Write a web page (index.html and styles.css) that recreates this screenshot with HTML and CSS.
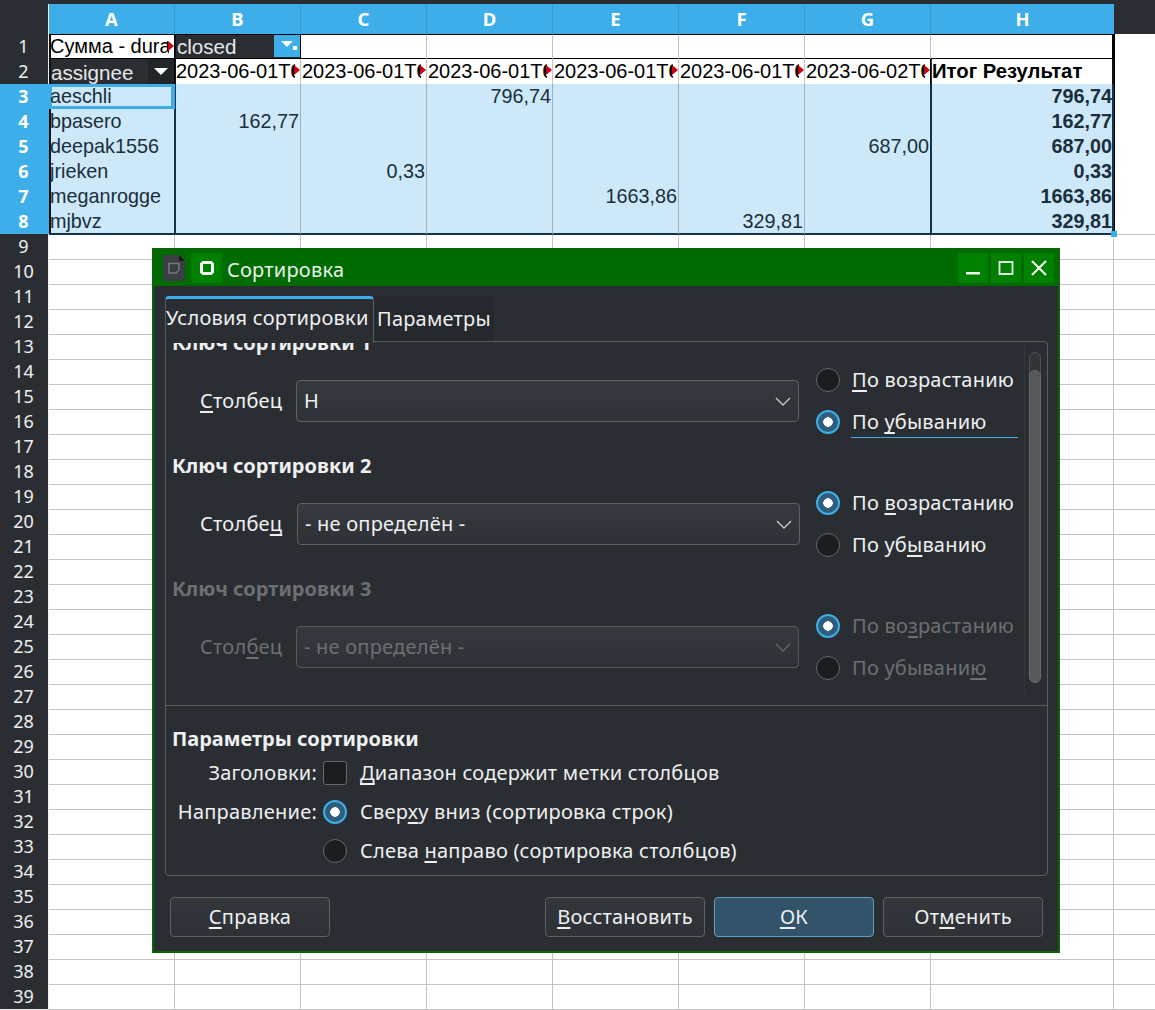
FILE: index.html
```html
<!DOCTYPE html>
<html lang="ru">
<head>
<meta charset="utf-8">
<title>Сортировка</title>
<link rel="stylesheet" href="styles.css">
</head>
<body>
<div class="sheet">
  <div class="row head">
    <div class="corner"></div>
    <div class="ch">A</div><div class="ch">B</div><div class="ch">C</div><div class="ch">D</div><div class="ch">E</div><div class="ch">F</div><div class="ch">G</div><div class="ch ch-last">H</div>
    <div class="ch-end"></div>
  </div>
  <div class="row">
    <div class="rh">1</div>
    <div class="c r1 first tri">Сумма - dura</div>
    <div class="c r1 dark sep">closed<span class="dd dd-blue"><svg class="dd-icon" width="16" height="12" viewBox="0 0 16 12"><path d="M0 1h12L6 7z" fill="#fff"/><rect x="12" y="6" width="4" height="4" fill="#fff"/></svg></span></div>
    <div class="c r1"></div><div class="c r1"></div><div class="c r1"></div><div class="c r1"></div><div class="c r1"></div>
    <div class="c r1 last"></div>
    <div class="c x xb"></div>
  </div>
  <div class="row">
    <div class="rh">2</div>
    <div class="c r2 first dark clip">assignee<span class="dd dd-dark"><svg width="14" height="8" viewBox="0 0 14 8"><path d="M0 0h14L7 7z" fill="#fff"/></svg></span></div>
    <div class="c r2 tri sep">2023-06-01T0</div>
    <div class="c r2 tri">2023-06-01T0</div>
    <div class="c r2 tri">2023-06-01T0</div>
    <div class="c r2 tri">2023-06-01T0</div>
    <div class="c r2 tri">2023-06-01T0</div>
    <div class="c r2 tri">2023-06-02T0</div>
    <div class="c r2 last sepl total">Итог Результат</div>
    <div class="c x xb"></div>
  </div>
  <div class="row">
    <div class="rh on">3</div>
    <div class="c s first cursor">aeschli</div><div class="c s sep"></div><div class="c s"></div><div class="c s num">796,74</div><div class="c s"></div><div class="c s"></div><div class="c s"></div><div class="c s slast sepl num total">796,74</div>
    <div class="c x xb"></div>
  </div>
  <div class="row">
    <div class="rh on">4</div>
    <div class="c s first">bpasero</div><div class="c s sep num">162,77</div><div class="c s"></div><div class="c s"></div><div class="c s"></div><div class="c s"></div><div class="c s"></div><div class="c s slast sepl num total">162,77</div>
    <div class="c x xb"></div>
  </div>
  <div class="row">
    <div class="rh on">5</div>
    <div class="c s first">deepak1556</div><div class="c s sep"></div><div class="c s"></div><div class="c s"></div><div class="c s"></div><div class="c s"></div><div class="c s num">687,00</div><div class="c s slast sepl num total">687,00</div>
    <div class="c x xb"></div>
  </div>
  <div class="row">
    <div class="rh on">6</div>
    <div class="c s first">jrieken</div><div class="c s sep"></div><div class="c s num">0,33</div><div class="c s"></div><div class="c s"></div><div class="c s"></div><div class="c s"></div><div class="c s slast sepl num total">0,33</div>
    <div class="c x xb"></div>
  </div>
  <div class="row">
    <div class="rh on">7</div>
    <div class="c s first">meganrogge</div><div class="c s sep"></div><div class="c s"></div><div class="c s"></div><div class="c s num">1663,86</div><div class="c s"></div><div class="c s"></div><div class="c s slast sepl num total">1663,86</div>
    <div class="c x xb"></div>
  </div>
  <div class="row">
    <div class="rh on">8</div>
    <div class="c s first end">mjbvz</div><div class="c s sep end"></div><div class="c s end"></div><div class="c s end"></div><div class="c s end"></div><div class="c s num end">329,81</div><div class="c s end"></div><div class="c s slast sepl num total end">329,81</div>
    <div class="c x xb"></div>
  </div>
  <div class="row"><div class="rh">9</div><div class="blank"></div></div>
  <div class="row"><div class="rh">10</div><div class="blank"></div></div>
  <div class="row"><div class="rh">11</div><div class="blank"></div></div>
  <div class="row"><div class="rh">12</div><div class="blank"></div></div>
  <div class="row"><div class="rh">13</div><div class="blank"></div></div>
  <div class="row"><div class="rh">14</div><div class="blank"></div></div>
  <div class="row"><div class="rh">15</div><div class="blank"></div></div>
  <div class="row"><div class="rh">16</div><div class="blank"></div></div>
  <div class="row"><div class="rh">17</div><div class="blank"></div></div>
  <div class="row"><div class="rh">18</div><div class="blank"></div></div>
  <div class="row"><div class="rh">19</div><div class="blank"></div></div>
  <div class="row"><div class="rh">20</div><div class="blank"></div></div>
  <div class="row"><div class="rh">21</div><div class="blank"></div></div>
  <div class="row"><div class="rh">22</div><div class="blank"></div></div>
  <div class="row"><div class="rh">23</div><div class="blank"></div></div>
  <div class="row"><div class="rh">24</div><div class="blank"></div></div>
  <div class="row"><div class="rh">25</div><div class="blank"></div></div>
  <div class="row"><div class="rh">26</div><div class="blank"></div></div>
  <div class="row"><div class="rh">27</div><div class="blank"></div></div>
  <div class="row"><div class="rh">28</div><div class="blank"></div></div>
  <div class="row"><div class="rh">29</div><div class="blank"></div></div>
  <div class="row"><div class="rh">30</div><div class="blank"></div></div>
  <div class="row"><div class="rh">31</div><div class="blank"></div></div>
  <div class="row"><div class="rh">32</div><div class="blank"></div></div>
  <div class="row"><div class="rh">33</div><div class="blank"></div></div>
  <div class="row"><div class="rh">34</div><div class="blank"></div></div>
  <div class="row"><div class="rh">35</div><div class="blank"></div></div>
  <div class="row"><div class="rh">36</div><div class="blank"></div></div>
  <div class="row"><div class="rh">37</div><div class="blank"></div></div>
  <div class="row"><div class="rh">38</div><div class="blank"></div></div>
  <div class="row"><div class="rh">39</div><div class="blank"></div></div>
</div>

<div class="dialog">
  <div class="title">
    <span class="app-icon"><svg width="22" height="26" viewBox="0 0 22 26"><path d="M0 0h16l6 6v20H0z" fill="#3b3e42"/><path d="M16 0l6 6h-6z" fill="#16181a"/><path d="M6 8.500h10v6.500l-3 3H6z" fill="none" stroke="#777a7d" stroke-width="1.500"/></svg></span>
    <span class="tbtn tbtn-pin"><svg width="16" height="16" viewBox="0 0 16 16"><path d="M4 2.500h8l1.500 1.500v8L12 13.500H4L2.500 12V4z" fill="none" stroke="#f2f7f2" stroke-width="3"/></svg></span>
    <span class="title-text">Сортировка</span>
    <span class="tbtn tbtn-min"><svg width="16" height="16" viewBox="0 0 16 16"><rect x="1" y="12" width="14" height="2.500" fill="#eef5ee"/></svg></span>
    <span class="tbtn"><svg width="16" height="16" viewBox="0 0 16 16"><rect x="1.500" y="2" width="13" height="12" fill="none" stroke="#eef5ee" stroke-width="1.800"/></svg></span>
    <span class="tbtn"><svg width="16" height="16" viewBox="0 0 16 16"><path d="M1 1l14 14M15 1L1 15" fill="none" stroke="#eef5ee" stroke-width="2.200"/></svg></span>
  </div>
  <div class="body">
    <div class="tabs">
      <div class="tab tab-on">Условия сортировки</div>
      <div class="tab">Параметры</div>
    </div>
    <div class="pane">
      <div class="scroller">
        <div class="keys">
          <section class="key">
            <h2 class="kh">Ключ сортировки 1</h2>
            <div class="krow">
              <span class="klabel"><u>С</u>толбец</span>
              <div class="sel"><span>H</span><svg class="chev" width="16" height="9" viewBox="0 0 16 9"><path d="M1 1l7 7 7-7" fill="none" stroke="#c9cbcc" stroke-width="1.300"/></svg></div>
              <div class="opts">
                <div class="opt"><i class="radio"></i><span><u>П</u>о возрастанию</span></div>
                <div class="opt"><i class="radio radio-on"></i><span class="focus">По <u>у</u>быванию</span></div>
              </div>
            </div>
          </section>
          <section class="key k2">
            <h2 class="kh">Ключ сортировки 2</h2>
            <div class="krow">
              <span class="klabel">Столбе<u>ц</u></span>
              <div class="sel"><span>- не определён -</span><svg class="chev" width="16" height="9" viewBox="0 0 16 9"><path d="M1 1l7 7 7-7" fill="none" stroke="#c9cbcc" stroke-width="1.300"/></svg></div>
              <div class="opts">
                <div class="opt"><i class="radio radio-on"></i><span>По <u>в</u>озрастанию</span></div>
                <div class="opt"><i class="radio"></i><span>По уб<u>ы</u>ванию</span></div>
              </div>
            </div>
          </section>
          <section class="key off">
            <h2 class="kh">Ключ сортировки 3</h2>
            <div class="krow">
              <span class="klabel">Стол<u>б</u>ец</span>
              <div class="sel"><span>- не определён -</span><svg class="chev" width="16" height="9" viewBox="0 0 16 9"><path d="M1 1l7 7 7-7" fill="none" stroke="#66696b" stroke-width="1.300"/></svg></div>
              <div class="opts">
                <div class="opt"><i class="radio radio-on"></i><span>По во<u>з</u>растанию</span></div>
                <div class="opt"><i class="radio"></i><span>По убывани<u>ю</u></span></div>
              </div>
            </div>
          </section>
        </div>
        <div class="sbar"><div class="strack"><div class="sthumb"></div></div></div>
      </div>
      <div class="params">
        <h2 class="kh">Параметры сортировки</h2>
        <div class="pgrid">
          <span class="plabel">Заголовки:</span><i class="check"></i><span><u>Д</u>иапазон содержит метки столбцов</span>
          <span class="plabel">Направление:</span><i class="radio radio-on"></i><span>Свер<u>х</u>у вниз (сортировка строк)</span>
          <span></span><i class="radio"></i><span>Слева <u>н</u>аправо (сортировка столбцов)</span>
        </div>
      </div>
    </div>
    <div class="btns">
      <div class="btn"><span><u>С</u>правка</span></div>
      <div class="btn btn-push"><span><u>В</u>осстановить</span></div>
      <div class="btn btn-ok"><span><u>О</u>К</span></div>
      <div class="btn"><span>От<u>м</u>енить</span></div>
    </div>
  </div>
</div>
</body>
</html>
```
FILE: styles.css
```css
* { box-sizing: border-box; }
html, body { margin: 0; padding: 0; height: 1010px; overflow: hidden; background: #fff; }
body { font-family: "Noto Sans", sans-serif; position: relative; }

/* ---------- spreadsheet ---------- */
.sheet { width: 1155px; }
.row {
  display: grid;
  grid-template-columns: 49px repeat(7, 126px) 183px 1fr;
  height: 25px;
}
.head { height: 34px; background: #2a2e32; padding-top: 4px; }
.corner { background: #2a2e32; border-right: 1px solid #eff0f1; }
.ch {
  background: #3daee9;
  border-right: 1px solid #339bd2;
  border-bottom: 1px solid #111;
  color: #fff;
  font-weight: 700;
  font-size: 18.5px;
  line-height: 30px;
  text-align: center;
}
.ch-last { border-right: 0; }
.ch-end { background: #2a2e32; }
.rh {
  background: #2a2e32;
  color: #eff0f1;
  font-size: 18px;
  line-height: 25px;
  text-align: center;
  border-bottom: 1px solid #e4e5e6;
  border-right: 1px solid #eff0f1;
  padding-right: 1px;
}
.rh.on {
  background: #3daee9;
  color: #fff;
  font-weight: 700;
  border-bottom-color: #339bd2;
  border-right-color: #3daee9;
}
.c {
  position: relative;
  font-family: "Liberation Sans", sans-serif;
  font-size: 19.8px;
  line-height: 24px;
  color: #000;
  padding: 0 1px;
  white-space: nowrap;
  overflow: hidden;
  background: #fff;
  border-right: 1px solid #c4c4c4;
  border-bottom: 1px solid #c4c4c4;
}
.x { border-right: 0; }
.xb { box-shadow: inset 1px 0 #000; }
.r1 { font-size: 20px; border-top: 1px solid #000; border-bottom: 2px solid #000; line-height: 22px; }
.r1.dark { font-size: 20.6px; line-height: 23px; }
.r2 { font-size: 20px; border-bottom-color: #2c4a5e; }
.r2:nth-child(8) { border-right-color: #000; }
.first { box-shadow: inset 2px 0 #111; border-right-color: #000; }
.last { border-right: 0; box-shadow: inset -2px 0 #000; }
.slast { border-right: 0; box-shadow: inset -2px 0 #14324a; }
.dark {
  background: #2a2e32;
  color: #e6e8e9;
  border-right-color: #000;
  padding-left: 2px;
}
.clip { line-height: 27px; font-size: 20.6px; }
.sep { box-shadow: inset 1px 0 #111; }
.sepl { box-shadow: inset 1px 0 #14324a, inset -2px 0 #111; font-size: 20.3px; }
.s {
  background: #cde8f8;
  color: #1a2e3c;
  border-right-color: #9db3c2;
  border-bottom-color: #9db3c2;
}
.s.first, .s:nth-child(8) { border-right-color: #14324a; }
.s.sep { box-shadow: inset 1px 0 #14324a; }
.s.sepl { box-shadow: inset 1px 0 #14324a, inset -2px 0 #14324a; padding-right: 2px; font-size: 19.8px; }
.num { text-align: right; }
.total { font-weight: 700; }
.s.cursor { box-shadow: inset 0 0 0 3px #3daee9; border-bottom-color: #3daee9; border-right-color: #3daee9; }
.end { border-bottom: 2px solid #14324a; }
.tri::before {
  content: "";
  position: absolute;
  right: 0;
  top: 0;
  width: 5px;
  height: 100%;
  background: #fff;
}
.tri::after {
  content: "";
  position: absolute;
  right: 0;
  top: 6px;
  border-left: 6px solid #c9000f;
  border-top: 5px solid transparent;
  border-bottom: 5px solid transparent;
  filter: drop-shadow(-1px 0 0 #000);
}
.dd {
  position: absolute;
  right: 0;
  top: 0;
  width: 26px;
  height: 100%;
  display: flex;
  align-items: center;
  justify-content: center;
}
.dd-blue { background: #3daee9; height: 22px; }
.dd-dark { background: #232629; }
.dd-icon { margin-left: 3px; }
.blank {
  grid-column: 2 / -1;
  border-bottom: 1px solid #c4c4c4;
  background:
    repeating-linear-gradient(to right, transparent 0 125px, #c4c4c4 125px 126px) left top / 882px 100% no-repeat,
    linear-gradient(#c4c4c4, #c4c4c4) 1064px 0 / 1px 100% no-repeat;
}
.sheet::after {
  content: "";
  position: absolute;
  left: 1111px;
  top: 231px;
  width: 6px;
  height: 6px;
  background: #3daee9;
}

/* ---------- dialog window ---------- */
.dialog {
  position: absolute;
  left: 152px;
  top: 248px;
  width: 908px;
  height: 705px;
  display: flex;
  flex-direction: column;
  background: #2a2e32;
  border: 2px solid #0b640b;
  color: #eff0f1;
  font-size: 20px;
  letter-spacing: .22px;
}
.title {
  height: 36px;
  flex: none;
  display: flex;
  align-items: center;
  gap: 3px;
  background: #006b00;
  padding: 0 4px 0 9px;
}
.app-icon { display: flex; width: 22px; height: 26px; margin-right: 3px; }
.tbtn {
  width: 30px;
  height: 30px;
  background: #008000;
  border-radius: 2px;
  display: flex;
  align-items: center;
  justify-content: center;
}
.tbtn-pin { width: 31px; margin-right: 2px; }
.title-text { flex: 1; color: #e9f3e9; line-height: 30px; padding-top: 3px; }
.body {
  flex: 1;
  display: flex;
  flex-direction: column;
  padding: 10px 10px 14px 11px;
}
.tabs { display: flex; height: 45px; position: relative; z-index: 1; flex: none; }
.tab {
  height: 45px;
  line-height: 46px;
  white-space: nowrap;
  padding: 0 0 0 3px;
  background: #25282c;
  width: 120px;
}
.tab-on {
  width: 209px;
  padding: 0;
  height: 47px;
  background: #2a2e32;
  border: 1px solid #5a5d60;
  border-top: 3px solid #3daee9;
  border-bottom: 0;
  border-radius: 4px 4px 0 0;
  line-height: 37px;
}
.pane {
  height: 535px;
  flex: none;
  border: 1px solid #5a5d60;
  border-radius: 4px;
  background: #2a2e32;
}
.scroller {
  height: 350px;
  overflow: hidden;
  display: flex;
}
.keys { flex: 1; margin-top: -11px; padding-left: 6px; }
.key { height: 123px; }
.kh { margin: 0; font-size: 20px; font-weight: 700; line-height: 24px; letter-spacing: 0; }
.krow { display: flex; align-items: flex-start; margin-top: 13px; }
.klabel { width: 124px; padding-left: 28px; line-height: 42px; margin-top: 12px; }
.k2 .klabel { width: 125px; }
.sel {
  width: 503px;
  height: 42px;
  margin-top: 12px;
  border: 1px solid #5f6265;
  border-radius: 4px;
  background: linear-gradient(#363a3f, #2e3237);
  display: flex;
  align-items: center;
  justify-content: space-between;
  padding: 0 7px 2px;
}
.chev { margin-top: 2px; }
.opts { margin-left: 17px; display: flex; flex-direction: column; gap: 18px; }
.k2 .opts { margin-left: 16px; }
.opt { display: flex; align-items: center; gap: 12px; height: 24px; white-space: nowrap; }
.opt > span { margin-top: -2px; }
.radio {
  display: block;
  flex: none;
  width: 24px;
  height: 24px;
  border-radius: 50%;
  background: #1b1e20;
  border: 1.500px solid #66696c;
}
.radio-on {
  border: 2px solid #3daee9;
  background: radial-gradient(circle, #fff 0 4.500px, #2f5d7b 5px);
}
.focus { position: relative; }
.focus::after {
  content: "";
  position: absolute;
  left: -1px;
  top: 29px;
  width: 167px;
  height: 1px;
  background: #3daee9;
}
.off { color: #6d6f72; }
.off .sel { border-color: #56595c; }
u { text-decoration-thickness: 2px; text-underline-offset: 3px; text-decoration-skip-ink: none; }
.sbar {
  width: 23px;
  flex: none;
  border-left: 1px solid #33373b;
  padding: 10px 0 0 5px;
}
.strack {
  width: 12px;
  height: 330px;
  border: 1px solid #4d5053;
  border-radius: 6px;
  background: #31353a;
  padding-top: 17px;
  margin-left: -1px;
}
.sthumb {
  width: 12px;
  height: 313px;
  margin-left: -1px;
  border: 1px solid #6a6d70;
  border-radius: 6px;
  background: #55585c;
}
.params { margin-top: 13px; border-top: 1px solid #5a5d60; padding: 21px 0 0 6px; }
.pgrid {
  display: grid;
  grid-template-columns: 145px 24px 1fr;
  column-gap: 6px;
  row-gap: 15px;
  margin-top: 10px;
  align-items: center;
  line-height: 24px;
}
.pgrid > span:nth-child(3n) { margin-left: 7px; }
.plabel { text-align: right; white-space: nowrap; }
.check {
  display: block;
  width: 24px;
  height: 24px;
  background: #1b1e20;
  border: 1.500px solid #66696c;
  border-radius: 3px;
}
.btns { display: flex; gap: 9px; margin-top: 21px; padding: 0 5px; }
.btn {
  width: 160px;
  height: 40px;
  display: flex;
  align-items: center;
  justify-content: center;
  padding-bottom: 2px;
  background: linear-gradient(#33373c, #2e3237);
  border: 1px solid #5f6265;
  border-radius: 4px;
  white-space: nowrap;
}
.btn-push { margin-left: auto; }
.btn-ok { background: #33536a; border-color: #5f9fc5; }
```
